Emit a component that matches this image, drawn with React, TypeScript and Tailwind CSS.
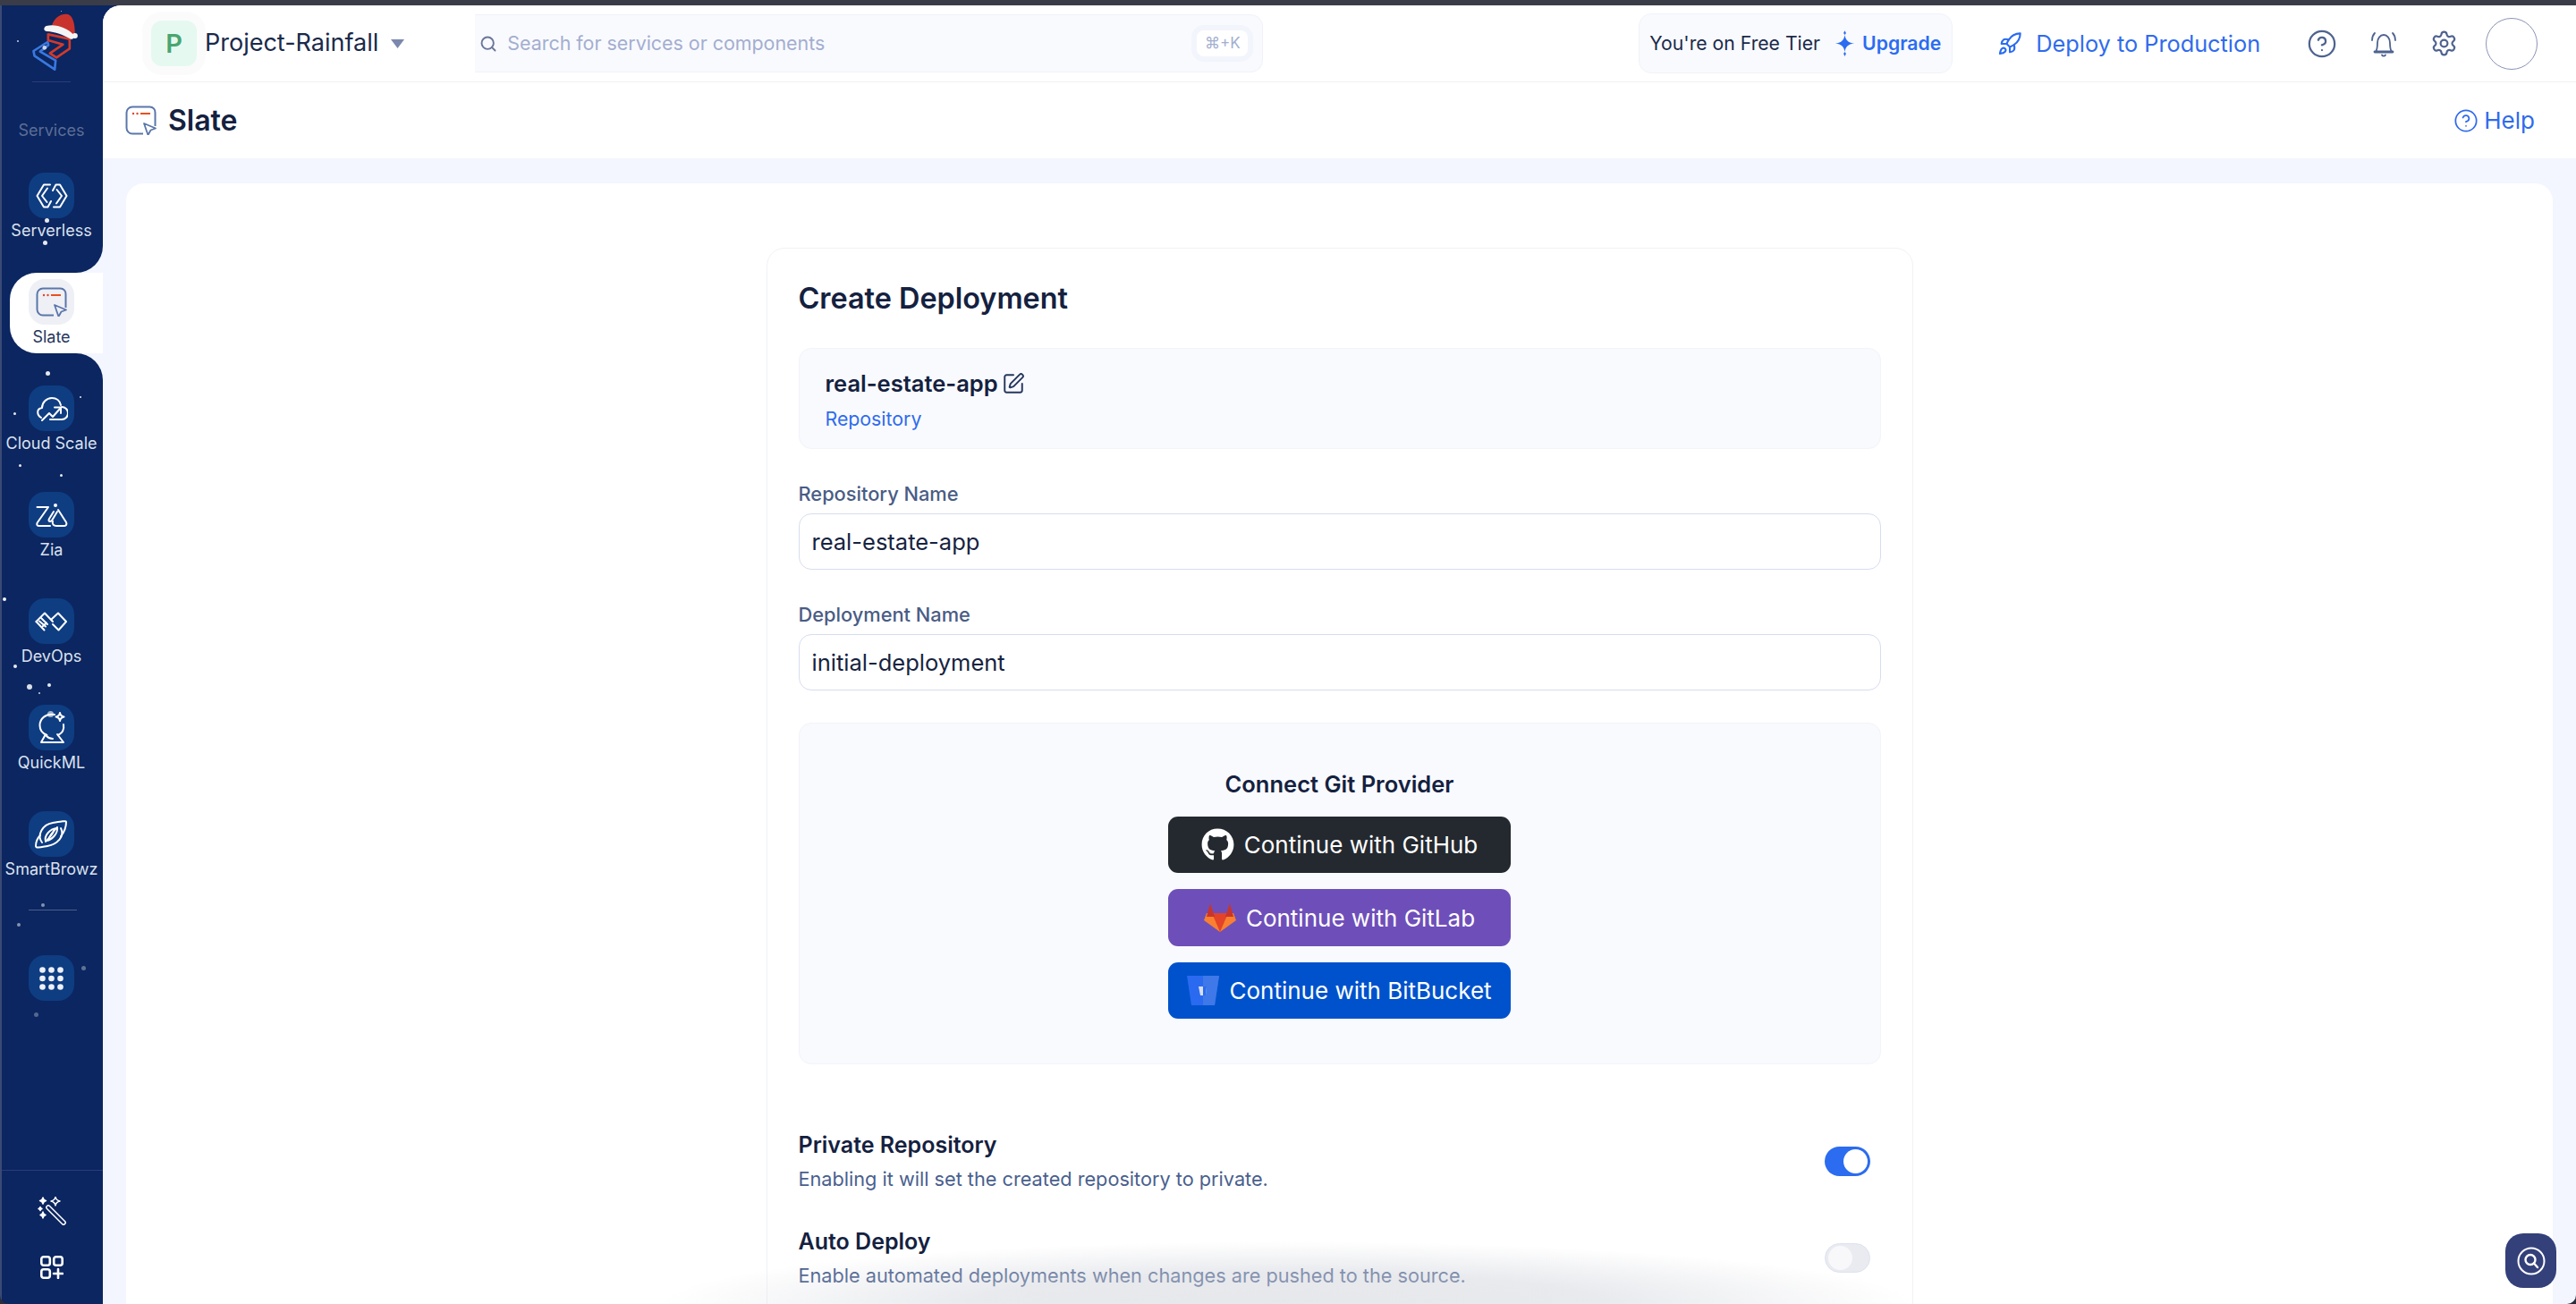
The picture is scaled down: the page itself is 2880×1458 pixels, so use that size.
import { Rocket, CircleHelp, Settings, SquarePen, Search } from "lucide-react";
import { FaGithub } from "react-icons/fa";
import type { ReactNode } from "react";

const snow: [number, number, number, number][] = [
  [52, 246, 5, 0.9], [50, 271, 5, 0.9], [53, 417, 5, 0.9], [90, 444, 2, 0.9], [16, 462, 3, 0.9], [20, 46, 2, 0.8], [68, 12, 1, 0.8],
  [22, 520, 3, 0.9], [68, 531, 3, 0.9], [5, 670, 4, 0.95], [17, 745, 4, 0.9], [33, 768, 6, 0.85], [55, 766, 4, 0.9], [44, 775, 2, 0.8],
  [56, 798, 7, 0.6], [48, 1012, 4, 0.5], [21, 1034, 4, 0.5], [93, 1082, 5, 0.35], [40, 1134, 5, 0.3],
];

function SlateIcon({ className }: { className: string }) {
  return (
    <svg viewBox="0 0 35 33" className={className} fill="none">
      <path d="M20 31.500H8a6.500 6.500 0 0 1-6.500-6.500V8A6.500 6.500 0 0 1 8 1.500h19.500A6 6 0 0 1 33.500 8v15" stroke="#5b76aa" strokeWidth="2" />
      <path d="M21 20l13 5.500-5.500 2-3 5.500z" stroke="#5b76aa" strokeWidth="1.800" strokeLinejoin="round" />
      <circle cx="9" cy="9" r="1.200" fill="#e0452a" />
      <circle cx="13.500" cy="9" r="1.200" fill="#e0452a" />
      <path d="M17 9h11" stroke="#e8501f" strokeWidth="2" />
    </svg>
  );
}

function NavIcon({ name }: { name: string }) {
  const common = { fill: "none", stroke: "#ffffff", strokeWidth: 2, strokeLinecap: "round" as const, strokeLinejoin: "round" as const };
  if (name === "Serverless")
    return (
      <svg viewBox="0 0 36 28" className="w-[36px] h-[28px]" {...common}>
        <path d="M16 1.500H9L1.500 14 9 26.500h4.500L17 20" />
        <path d="M13 5.500 7 14l5.500 7" />
        <path d="M20 26.500h7L34.500 14 27 1.500h-4.500L19 8" />
        <path d="M23 22.500 29 14l-5.500-7" />
      </svg>
    );
  if (name === "Cloud Scale")
    return (
      <svg viewBox="0 0 36 28" className="w-[36px] h-[28px]" {...common}>
        <path d="M6 24C1 21 .5 14 7 13c0-6 5-11 11-11 5 0 9 3 10 8" />
        <path d="M29 12a7 7 0 0 1 0 14H16" />
        <path d="M7 27l8-8 4 4 8-9" />
        <path d="M21 12.500h7V19" />
      </svg>
    );
  if (name === "Zia")
    return (
      <svg viewBox="0 0 36 26" className="w-[36px] h-[26px]" {...common}>
        <path d="M1.500 4H14L2 21c-1.500 2.500-.5 4 2 4h12" />
        <circle cx="22" cy="2" r="2" fill="#fff" stroke="none" />
        <path d="M20 9l-5 8c-1.500 3 1 4 3 2l6-10" />
        <path d="M25 7l9 14c1 2 0 4-2 4H23c-3 0-5-2-4-5" />
      </svg>
    );
  if (name === "DevOps")
    return (
      <svg viewBox="0 0 36 22" className="w-[36px] h-[22px]" {...common}>
        <path d="M19 8l7-6.500L35 11l-8.500 9.500L20 14" />
        <path d="M20 11 11 1.500 1.500 11" />
        <path d="M1.500 11l9 9.500M7 7l7 7M5 10.500l7 6M9 16l4-3.500" />
      </svg>
    );
  if (name === "QuickML")
    return (
      <svg viewBox="0 0 32 36" className="w-[32px] h-[36px]" {...common}>
        <path d="M19 3C9 1 2.500 8 2.500 15c0 5 2.500 9 8 11" />
        <path d="M29 14c1 6-2 10-6 12" />
        <path d="M9 25l-5 9h25l-7-9" />
        <path d="M10 27c2 2 4 3 7 3" />
        <path d="M25 1c.5 3 1.500 4 4.500 4.500C26.500 6 25.500 7 25 10c-.5-3-1.500-4-4.500-4.500C23.500 5 24.500 4 25 1z" />
      </svg>
    );
  if (name === "SmartBrowz")
    return (
      <svg viewBox="0 0 36 32" className="w-[36px] h-[32px]" {...common}>
        <path d="M8 25C2 17 8 5 20 3c6-1 15-3 15-1 0 5-2 11-6 16" />
        <path d="M29 9c5 9-4 18-15 20-6 1-13 3-13 0 0-4 2-9 5-12" />
        <path d="M12 24c-2-7 5-14 12-15-3 4-7 7-8 11" />
        <path d="M25 8c1 7-6 14-12 15 3-4 7-7 8-11" />
      </svg>
    );
  return (
    <svg viewBox="0 0 27 26" className="w-[27px] h-[26px]" fill="#eef1f8">
      {[3.500, 13.500, 23.500].map((x) =>
        [3.500, 13, 22.500].map((y) => <circle key={`${x}-${y}`} cx={x} cy={y} r="3.300" />)
      )}
    </svg>
  );
}

function NavItem({ name, label, active }: { name: string; label?: string; active?: boolean }) {
  return (
    <div className="flex flex-col items-center">
      <div className={`w-[51px] h-[51px] rounded-[18px] flex items-center justify-center ${active ? "bg-[#eef0f5]" : "bg-[#0f3d82]"}`}>
        {active ? <SlateIcon className="w-[35px] h-[33px]" /> : <NavIcon name={name} />}
      </div>
      {label && (
        <div className={`mt-[3px] text-[18px] leading-[22px] whitespace-nowrap ${active ? "text-[#26375c]" : "text-[#dbe1ee]"}`}>{label}</div>
      )}
    </div>
  );
}

function Logo() {
  return (
    <svg viewBox="100 40 170 210" className="ml-[8px] w-[57px] h-[70px]" fill="none">
      <path d="M160 142 113 172l3 16 68 46 3-30-52-30 28-22z" stroke="#3a78e0" strokeWidth="8" strokeLinejoin="round" />
      <circle cx="150" cy="161" r="7" fill="#cfd6e4" />
      <path d="M162 116l72 16v32l-44 30-22-14 44-30-50-14z" stroke="#d23a2b" strokeWidth="8" strokeLinejoin="round" />
      <path d="M172 98c4-32 26-50 50-50 20 0 30 24 30 70z" fill="#c9332d" />
      <path d="M156 88c30-8 70 6 92 30 4 8-2 16-10 14-26-14-50-24-82-26-10-2-10-14 0-18z" fill="#f5f5f5" />
      <circle cx="252" cy="121" r="9" fill="#f5f5f5" />
    </svg>
  );
}

function Field({ label, value }: { label: string; value: string }) {
  return (
    <div className="flex flex-col">
      <label className="text-[21.8px] leading-[28px] font-medium text-[#4a5c85]">{label}</label>
      <input
        readOnly
        value={value}
        className="mt-[8px] h-[63px] w-full rounded-[14px] border border-[#d7ddef] bg-white px-[14px] text-[25.500px] text-[#16233f] outline-none"
      />
    </div>
  );
}

function GitButton({ bg, icon, children }: { bg: string; icon: ReactNode; children: string }) {
  return (
    <button className={`w-[383px] rounded-[11px] flex items-center justify-center gap-[11px] text-white text-[26px] ${bg}`}>
      {icon}
      <span>{children}</span>
    </button>
  );
}

function Toggle({ on }: { on: boolean }) {
  return (
    <div className={`w-[51px] h-[33px] rounded-full flex items-center px-[3px] ${on ? "bg-[#2b6cf0] justify-end" : "bg-[#e9ebf0] border border-[#dde2f0] justify-start"}`}>
      <div className={`w-[27px] h-[27px] rounded-full ${on ? "bg-white" : "bg-[#f8f8fa]"}`} />
    </div>
  );
}

function Option({ title, desc, on }: { title: string; desc: string; on: boolean }) {
  return (
    <div className="flex items-start justify-between pr-[12px]">
      <div>
        <div className="text-[25px] leading-[32px] font-semibold text-[#14213f]">{title}</div>
        <div className="mt-[6px] text-[21.7px] leading-[32px] text-[#4a5f8e]">{desc}</div>
      </div>
      <div className="mt-[18px]">
        <Toggle on={on} />
      </div>
    </div>
  );
}

export default function App() {
  return (
    <div className="relative w-[2880px] h-[1458px] overflow-hidden flex flex-col bg-[#0b2660] [font-family:Inter,sans-serif]">
      <div className="h-[6px] shrink-0 bg-[#3a3c47]" />
      <div className="flex-1 min-h-0 flex">
        <aside className="w-[115px] shrink-0 flex flex-col bg-[#f3f6fe]">
          <div className="h-[299px] shrink-0 bg-[#0b2660] rounded-br-[30px] border-l-2 border-[#3a4a75] pr-[2px] flex flex-col items-center pt-[7px]">
            <Logo />
            <div className="mt-[8px] w-[43px] h-px bg-[#2a3f78]" />
            <div className="mt-[43px] text-[18px] leading-[22px] text-[#5d6d96]">Services</div>
            <div className="mt-[36px]">
              <NavItem name="Serverless" label="Serverless" />
            </div>
          </div>
          <div className="h-[90px] shrink-0 bg-[#0b2660] border-l-2 border-[#3a4a75] pl-[9px]">
            <div className="h-full bg-white rounded-l-[30px] pr-[11px] pt-[7px]">
              <NavItem name="Slate" label="Slate" active />
            </div>
          </div>
          <div className="flex-1 min-h-0 bg-[#0b2660] rounded-tr-[30px] border-l-2 border-[#3a4a75] flex flex-col">
            <div className="pt-[36px] pr-[2px] flex flex-col items-center gap-[43px]">
              <NavItem name="Cloud Scale" label="Cloud Scale" />
              <NavItem name="Zia" label="Zia" />
              <NavItem name="DevOps" label="DevOps" />
              <NavItem name="QuickML" label="QuickML" />
              <NavItem name="SmartBrowz" label="SmartBrowz" />
            </div>
            <div className="mt-[34px] mx-auto pr-[2px] w-[54px] h-px bg-[#4d5d8a]" />
            <div className="mt-[50px] pr-[2px] flex justify-center">
              <NavItem name="Grid" />
            </div>
            <div className="mt-auto border-t border-[#2f3a78] h-[150px] pr-[2px] flex flex-col items-center">
              <svg viewBox="0 0 32 32" className="mt-[29px] w-[32px] h-[32px]" fill="none" stroke="#fff" strokeWidth="1.500" strokeLinejoin="round">
                <path d="M10.500 10.500c1-1 2-1 3 0l17 17c1 1 1 2 0 3s-2 1-3 0l-17-17c-1-1-1-2 0-3z" />
                <path d="M6 1c.4 2 1.500 3.500 3.500 3.500C7.500 5 6.400 6 6 8 5.600 6 4.500 5 2.500 4.500 4.500 4.500 5.600 3 6 1z" fill="#fff" />
                <path d="M20 0c.5 3 2 4.500 5 5-3 .5-4.500 2-5 5-.5-3-2-4.500-5-5 3-.5 4.500-2 5-5z" />
                <path d="M3 11.500c.3 1 .7 1.500 2 2-1.300.5-1.700 1-2 2-.3-1-.7-1.500-2-2 1.300-.5 1.700-1 2-2z" fill="#fff" />
                <path d="M6 17c.3 2 1.200 3 3 3.500-1.800.5-2.700 1.500-3 3.500-.3-2-1.200-3-3-3.500 1.800-.5 2.700-1.500 3-3.500z" fill="#fff" />
              </svg>
              <svg viewBox="0 0 26 26" className="mt-[34px] w-[26px] h-[26px]" fill="none" stroke="#fff" strokeWidth="2.600" strokeLinecap="round">
                <rect x="1.300" y="1.300" width="9.500" height="9.500" rx="2.500" />
                <rect x="15.200" y="1.300" width="9.500" height="9.500" rx="2.500" />
                <rect x="1.300" y="15.200" width="9.500" height="9.500" rx="2.500" />
                <path d="M20 15v10M15 20h10" />
              </svg>
            </div>
          </div>
        </aside>

        <main className="flex-1 min-w-0 flex flex-col bg-[#f3f6fe] rounded-tl-[20px] overflow-hidden">
          <header className="h-[86px] shrink-0 bg-white border-b border-[#eff1f4] flex items-center pl-[54px]">
            <div className="w-[51px] h-[51px] rounded-[12px] bg-[#e5f9f0] ring-[10px] ring-[#fbfbfc] flex items-center justify-center text-[29px] font-semibold text-[#4aa56f]">
              P
            </div>
            <span className="ml-[9px] text-[27px] text-[#1a2a4a]">Project-Rainfall</span>
            <svg viewBox="0 0 15 10" className="ml-[14px] w-[15px] h-[10px]" fill="#7b87ad">
              <path d="M0 0h15L7.500 10z" />
            </svg>
            <div className="ml-[79px] w-[881px] h-[65px] rounded-r-[14px] bg-[#f9fafe] border border-l-0 border-[#f0f2f8] flex items-center pl-[5px] pr-[16px]">
              <Search className="w-[20px] h-[20px] text-[#6b7699]" strokeWidth={2.300} />
              <input
                readOnly
                placeholder="Search for services or components"
                className="ml-[11px] flex-1 bg-transparent text-[21.4px] outline-none placeholder:text-[#a3aed0]"
              />
              <div className="w-[57px] h-[29px] rounded-[8px] bg-white ring-[6px] ring-[#f3f5fc] flex items-center justify-center text-[17px] text-[#a3aed0]">⌘+K</div>
            </div>
            <div className="ml-[420px] w-[351px] h-[67px] rounded-[14px] bg-[#f9fafe] border border-[#f0f2f8] flex items-center pl-[11px] text-[21.2px] whitespace-nowrap">
              <span className="text-[#1a2a4a]">You're on Free Tier</span>
              <svg viewBox="0 0 24 30" className="ml-[16px] w-[23px] h-[29px]" fill="#2b6cf0">
                <path d="M12 5c1 6 3.500 9 11 10-7.500 1-10 4-11 10-1-6-3.500-9-11-10 7.500-1 10-4 11-10z" />
                <path d="M12 0l1.500 3L12 5l-1.500-2zM12 30l1.500-3L12 25l-1.500 2z" />
              </svg>
              <span className="ml-[8px] font-semibold text-[#2b6cf0]">Upgrade</span>
            </div>
            <Rocket className="ml-[50px] w-[28px] h-[28px] text-[#2b6cf0]" strokeWidth={1.800} />
            <span className="ml-[15px] text-[25.300px] text-[#2f6bed] whitespace-nowrap">Deploy to Production</span>
            <CircleHelp className="ml-[52px] w-[34px] h-[34px] text-[#4f6390]" strokeWidth={1.600} />
            <svg viewBox="0 0 30 30" className="ml-[37px] w-[30px] h-[30px]" fill="none" stroke="#4f6390" strokeWidth="1.800" strokeLinecap="round" strokeLinejoin="round">
              <path d="M6 24c2-3 2-6 2-10 0-5 3-9 7-9s7 4 7 9c0 4 0 7 2 10z" />
              <path d="M5 24h20" strokeWidth="2.800" />
              <path d="M13 27.500c1 1.500 3 1.500 4 0" />
              <path d="M5 3C3 5 2 8 2 11M25 3c2 2 3 5 3 8" />
            </svg>
            <Settings className="ml-[37px] w-[31px] h-[31px] text-[#4f6390]" strokeWidth={1.700} />
            <div className="ml-[31px] w-[58px] h-[58px] rounded-full border border-[#8a94b5] bg-white" />
          </header>

          <div className="h-[85px] shrink-0 bg-white flex items-center justify-between pl-[25px] pr-[46px]">
            <div className="flex items-center">
              <SlateIcon className="w-[35px] h-[33px]" />
              <span className="ml-[13px] text-[32px] font-semibold text-[#14213f]">Slate</span>
            </div>
            <div className="flex items-center text-[26px] text-[#2f6bed]">
              <CircleHelp className="w-[28px] h-[28px]" strokeWidth={1.500} />
              <span className="ml-[6px]">Help</span>
            </div>
          </div>

          <div className="flex-1 min-h-0 px-[26px] pt-[28px]">
            <div className="h-[1300px] rounded-t-[20px] bg-white pt-[72px] flex justify-center">
              <section className="w-[1282px] rounded-t-[20px] border border-[#f0f2f5] px-[35px] pt-[36px]">
                <h1 className="text-[32.400px] leading-[40px] font-semibold text-[#14213f]">Create Deployment</h1>
                <div className="mt-[35px] h-[113px] rounded-[14px] bg-[#f9fafe] border border-[#f2f4f9] pl-[29px] pt-[23px]">
                  <div className="flex items-center text-[25.500px] leading-[32px] font-semibold text-[#14213f]">
                    real-estate-app
                    <SquarePen className="ml-[4px] w-[26px] h-[26px] text-[#26375c]" strokeWidth={1.800} />
                  </div>
                  <div className="mt-[8px] text-[21.300px] leading-[30px] text-[#2f6bed]">Repository</div>
                </div>
                <div className="mt-[36px] flex flex-col gap-[36px]">
                  <Field label="Repository Name" value="real-estate-app" />
                  <Field label="Deployment Name" value="initial-deployment" />
                </div>
                <div className="mt-[36px] h-[382px] rounded-[14px] bg-[#f9fafe] border border-[#f2f4f9] flex flex-col items-center pt-[51px]">
                  <div className="text-[25.500px] leading-[34px] font-semibold text-[#14213f]">Connect Git Provider</div>
                  <div className="mt-[19px] flex flex-col gap-[18px]">
                    <div className="h-[63px] flex">
                      <GitButton bg="bg-[#24292f]" icon={<FaGithub className="w-[37px] h-[37px]" />}>Continue with GitHub</GitButton>
                    </div>
                    <div className="h-[64px] flex">
                      <GitButton
                        bg="bg-[#6e4fb9]"
                        icon={
                          <svg viewBox="0 0 36 34" className="w-[36px] h-[34px]">
                            <path d="M18 33 0 20 3 12h30l3 8z" fill="#f98030" />
                            <path d="M18 33 9 12h18z" fill="#e24329" />
                            <path d="M3 16 7 1l5 15zM24 16 29 1l4 15z" fill="#c9352c" />
                          </svg>
                        }
                      >
                        Continue with GitLab
                      </GitButton>
                    </div>
                    <div className="h-[63px] flex">
                      <GitButton
                        bg="bg-[#0052cc]"
                        icon={
                          <svg viewBox="0 0 36 34" className="w-[36px] h-[34px]">
                            <path d="M0 0h36l-5 33H5z" fill="#2a6af0" />
                            <path d="M18 0h18l-5 33H18z" fill="#3f78e8" />
                            <path d="M13 12h9l-1 10h-6z" fill="#d9dfea" />
                            <path d="M18 12h4l-1 10h-3z" fill="#2a6af0" />
                          </svg>
                        }
                      >
                        Continue with BitBucket
                      </GitButton>
                    </div>
                  </div>
                </div>
                <div className="mt-[74px] flex flex-col gap-[38px]">
                  <Option title="Private Repository" desc="Enabling it will set the created repository to private." on />
                  <Option title="Auto Deploy" desc="Enable automated deployments when changes are pushed to the source." on={false} />
                </div>
              </section>
            </div>
          </div>
        </main>
      </div>

      {snow.map(([x, y, s, o], i) => (
        <span
          key={i}
          className="absolute rounded-full bg-white"
          style={{ left: x - s / 2, top: y - s / 2, width: s, height: s, opacity: o }}
        />
      ))}

      <div className="absolute left-[740px] bottom-[-70px] w-[1400px] h-[140px] pointer-events-none bg-[radial-gradient(closest-side,rgba(205,208,216,0.5)_0%,rgba(205,208,216,0.45)_50%,rgba(255,255,255,0)_100%)]" />

      <button className="absolute left-[2801px] top-[1379px] w-[57px] h-[61px] rounded-[20px] bg-[#34407a] flex items-center justify-center">
        <svg viewBox="0 0 32 32" className="w-[32px] h-[32px]" fill="none" stroke="#fff" strokeWidth="2" strokeLinecap="round">
          <circle cx="16" cy="16" r="14.500" />
          <circle cx="15" cy="14.500" r="5.500" strokeWidth="2.400" />
          <path d="M19 18.500l4 4.500" strokeWidth="2.400" />
        </svg>
      </button>

      <svg viewBox="0 0 10 10" className="absolute right-0 bottom-0 w-[10px] h-[10px]">
        <path d="M10 0a10 10 0 0 1-10 10h10z" fill="#2a2d3d" />
      </svg>
      <svg viewBox="0 0 10 10" className="absolute left-0 bottom-0 w-[10px] h-[10px]">
        <path d="M0 0a10 10 0 0 0 10 10H0z" fill="#2a2d3d" />
      </svg>
    </div>
  );
}
